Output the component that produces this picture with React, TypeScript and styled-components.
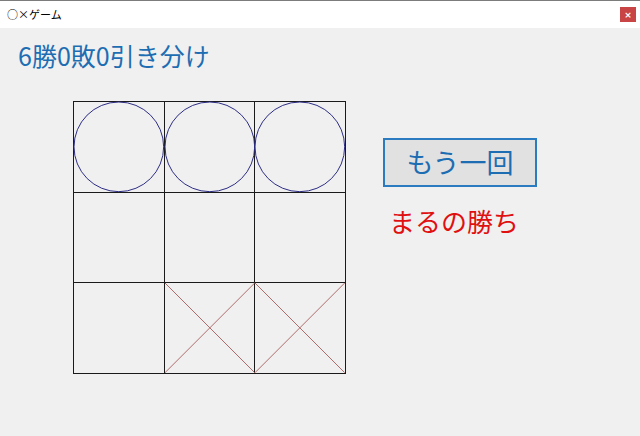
import React, { useState } from "react";
import styled, { createGlobalStyle } from "styled-components";

const GlobalStyle = createGlobalStyle`
  html, body {
    margin: 0;
    padding: 0;
    background: #f0f0f0;
  }
  body {
    font-family: "Noto Sans CJK JP", "Noto Sans", sans-serif;
  }
`;

const Window = styled.div`
  width: 640px;
  height: 436px;
  display: flex;
  flex-direction: column;
  background: #f0f0f0;
  overflow: hidden;
`;

const TitleBar = styled.div`
  height: 27px;
  border-top: 1px solid #7c7c7c;
  background: #ffffff;
  display: flex;
  align-items: center;
  justify-content: space-between;
  padding: 0 4px 0 7px;
`;

const TitleText = styled.span`
  font-size: 11px;
  color: #000;
  line-height: 1;
`;

const CloseButton = styled.div`
  width: 16px;
  height: 15px;
  background: #c94444;
  color: #fff;
  font-size: 9px;
  font-weight: bold;
  display: flex;
  align-items: center;
  justify-content: center;
  font-family: "DejaVu Sans", sans-serif;
`;

const Content = styled.div`
  flex: 1;
  display: flex;
  flex-direction: column;
  padding: 11px 0 0 18px;
`;

const Score = styled.div`
  font-size: 25px;
  line-height: 32px;
  color: #1d6db3;
`;

const Main = styled.div`
  display: flex;
  align-items: flex-start;
  margin-top: 30px;
  padding-left: 55px;
`;

const Board = styled.div`
  width: 273px;
  height: 273px;
  display: grid;
  grid-template-columns: repeat(3, 1fr);
  grid-template-rows: repeat(3, 1fr);
  border-left: 1px solid #1a1a1a;
  border-top: 1px solid #1a1a1a;
  box-sizing: border-box;
`;

const Cell = styled.div`
  border-right: 1px solid #1a1a1a;
  border-bottom: 1px solid #1a1a1a;
  position: relative;
  cursor: pointer;

  svg {
    position: absolute;
    inset: 0;
    width: 100%;
    height: 100%;
    overflow: visible;
  }
`;

const Side = styled.div`
  display: flex;
  flex-direction: column;
  align-items: flex-start;
  margin-left: 37px;
  margin-top: 37px;
`;

const RetryButton = styled.button`
  width: 154px;
  height: 49px;
  box-sizing: border-box;
  border: 2px solid #2a7bbf;
  background: #e1e1e1;
  color: #1d6db3;
  font-family: inherit;
  font-size: 27px;
  line-height: 1;
  padding: 0 0 2px;
  cursor: pointer;
`;

const Result = styled.div`
  margin-top: 16px;
  margin-left: 6px;
  font-size: 26px;
  line-height: 36px;
  color: #e01010;
`;

type Mark = "o" | "x" | "";

const CircleMark = () => (
  <svg viewBox="0 0 90 90" preserveAspectRatio="none">
    <ellipse cx="45" cy="45" rx="45" ry="45" fill="none" stroke="#2c2c85" strokeWidth="1" />
  </svg>
);

const CrossMark = () => (
  <svg viewBox="0 0 90 90" preserveAspectRatio="none">
    <line x1="0" y1="0" x2="90" y2="90" stroke="#b06a6a" strokeWidth="1" />
    <line x1="90" y1="0" x2="0" y2="90" stroke="#b06a6a" strokeWidth="1" />
  </svg>
);

const App = () => {
  const [cells] = useState<Mark[]>(["o", "o", "o", "", "", "", "", "x", "x"]);

  return (
    <>
      <GlobalStyle />
      <Window>
        <TitleBar>
          <TitleText>○×ゲーム</TitleText>
          <CloseButton>×</CloseButton>
        </TitleBar>
        <Content>
          <Score>6勝0敗0引き分け</Score>
          <Main>
            <Board>
              {cells.map((c, i) => (
                <Cell key={i}>
                  {c === "o" && <CircleMark />}
                  {c === "x" && <CrossMark />}
                </Cell>
              ))}
            </Board>
            <Side>
              <RetryButton>もう一回</RetryButton>
              <Result>まるの勝ち</Result>
            </Side>
          </Main>
        </Content>
      </Window>
    </>
  );
};

export default App;
